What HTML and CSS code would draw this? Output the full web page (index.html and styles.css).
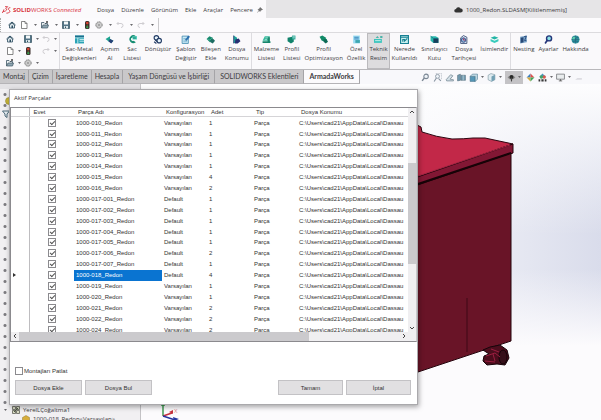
FILE: index.html
```html
<!DOCTYPE html>
<html lang="tr">
<head>
  <meta charset="UTF-8">
  <meta name="viewport" content="width=device-width, initial-scale=1.0">
  <title>1000_Redon.SLDASM</title>
  <link rel="stylesheet" href="styles.css">
</head>
<body>
  <svg class="sprite" aria-hidden="true">
    <symbol id="home" viewBox="0 0 16 16"><path d="M1 8l7-6 7 6" fill="none" stroke="#2d4d60" stroke-width="2"/><path d="M3 8v6h10V8L8 4z" fill="#dfe9ee" stroke="#2d4d60" stroke-width="1.6"/><path d="M7 9h3v5H7z" fill="#2d4d60"/></symbol>
    <symbol id="doc" viewBox="0 0 16 16"><path d="M3 1h7l4 4v10H3z" fill="#fff" stroke="#555" stroke-width="1.4"/><path d="M10 1v4h4" fill="none" stroke="#555" stroke-width="1.2"/></symbol>
    <symbol id="open" viewBox="0 0 16 16"><path d="M1 14V3h5l2 2h5v3" fill="#e8eef1" stroke="#3f5664" stroke-width="1.6"/><path d="M1 14l3-6h11l-2 6z" fill="#8fa6b3" stroke="#3f5664" stroke-width="1.4"/><path d="M9 5l4-4m0 0v3m0-3h-3" stroke="#333" stroke-width="1.4"/></symbol>
    <symbol id="save" viewBox="0 0 16 16"><path d="M1 1h14v14H1z" fill="#527386" stroke="#33515f" stroke-width="1.4"/><path d="M4 1h8v6H4z" fill="#f3f7f8"/><path d="M4 10h8v5H4z" fill="#dce6ea"/><path d="M6 11h2v3H6z" fill="#33515f"/></symbol>
    <symbol id="light" viewBox="0 0 16 16"><rect x="4" y="0" width="9" height="16" rx="3" fill="#3b2f2c"/><circle cx="8.500" cy="4" r="2.600" fill="#d8402f"/><circle cx="8.500" cy="8.500" r="1.500" fill="#70612e"/><circle cx="8.500" cy="12.500" r="2.300" fill="#3b9c50"/></symbol>
    <symbol id="gear" viewBox="0 0 16 16"><circle cx="8" cy="8" r="6.300" fill="none" stroke="#777" stroke-width="2" stroke-dasharray="3 1"/><circle cx="8" cy="8" r="5" fill="#eee" stroke="#777"/><circle cx="8" cy="8" r="2" fill="#fff" stroke="#666" stroke-width="1.4"/></symbol>
    <symbol id="undo" viewBox="0 0 16 16"><path d="M5 2L2 5l3 3M2 5h8q4 0 4 4t-4 4" fill="none" stroke="#cfcdd1" stroke-width="2"/></symbol>
    <symbol id="redo" viewBox="0 0 16 16"><path d="M11 2l3 3-3 3M14 5H6q-4 0-4 4t4 4" fill="none" stroke="#cfcdd1" stroke-width="2"/></symbol>
  </svg>

  <header class="titlebar">
    <div class="menu-side">
      <svg class="ds" viewBox="0 0 27 24"><path d="M9 2h8l-6 6q5 1 3 4-3 4-11 5M6 10q-4 9-5 11M25 5q-6 0-6 3t4 6-3 6-7 1" fill="none" stroke="#d8323c" stroke-width="2.600"/></svg>
      <span class="brand"><b>SOLID</b>WORKS <i>Connected</i></span>
      <nav class="menu">
        <a href="#">Dosya</a><a href="#">Düzenle</a><a href="#">Görünüm</a><a href="#">Ekle</a><a href="#">Araçlar</a><a href="#">Pencere</a>
      </nav>
      <svg class="pin" viewBox="0 0 12 12"><path d="M6 1l5 4-3 1-2 3-4-4 3-1zM4 7l-3 4" fill="#777" stroke="#555"/></svg>
    </div>
    <div class="doc-title">
      <svg class="cloud" viewBox="0 0 18 12"><path d="M4 11a3.500 3.500 0 0 1 0-7 5 5 0 0 1 9-1 4 4 0 0 1 1 8z" fill="#333"/></svg>
      <span>1000_Redon.SLDASM[Kilitlenmemiş]</span>
    </div>
  </header>

  <div class="quickbar">
    <div class="quick">
      <button aria-label="Giriş"><svg><use href="#home"/></svg></button>
      <button aria-label="Yeni"><svg><use href="#doc"/></svg></button><i class="caret"></i>
      <button aria-label="Aç"><svg><use href="#open"/></svg></button><i class="caret"></i>
      <button aria-label="Kaydet"><svg><use href="#save"/></svg></button><i class="caret"></i>
      <button aria-label="Yeniden oluştur"><svg><use href="#light"/></svg></button>
      <button aria-label="Seçenekler"><svg><use href="#gear"/></svg></button><i class="caret"></i>
      <button aria-label="Geri al"><svg><use href="#undo"/></svg></button><i class="caret"></i>
      <button aria-label="Yinele"><svg><use href="#redo"/></svg></button><i class="caret"></i>
    </div>
  </div>

  <div class="ribbon">
    <div class="mini">
      <button aria-label="Giriş"><svg><use href="#home"/></svg></button><i></i>
      <button aria-label="Kaydet"><svg><use href="#save"/></svg></button><i class="caret"></i>
      <button aria-label="Geri al"><svg><use href="#undo"/></svg></button><i class="caret"></i>
      <button aria-label="Yeni"><svg><use href="#doc"/></svg></button><i class="caret"></i>
      <button aria-label="Yeniden oluştur"><svg><use href="#light"/></svg></button><i></i>
      <button aria-label="Yinele"><svg><use href="#redo"/></svg></button><i class="caret"></i>
      <button aria-label="Aç"><svg><use href="#open"/></svg></button><i class="caret"></i>
      <button aria-label="Seçenekler"><svg><use href="#gear"/></svg></button><i class="caret"></i>
    </div>
    <div class="group">
      <button class="tool"><svg viewBox="0 0 16 16"><path d="M0 1h16v14H0z" fill="#2aa3b5"/><path d="M0 5h16M5 5v10M8 8h8M8 11h8" stroke="#d8f4f5" stroke-width="1.500"/><path d="M0 1h16v3H0z" fill="#1b6f8d"/></svg><span>Sac-Metal<br>Değişkenleri</span></button>
      <button class="tool"><svg viewBox="0 0 16 16"><path d="M1 7l8-5v5l6 3-4 4-5-3z" fill="#1fa591"/><path d="M9 7l6 3-4 5-5-4z" fill="#263f77"/></svg><span>Açınım<br>Al</span></button>
      <button class="tool"><svg viewBox="0 0 16 16"><path d="M14 2a7 7 0 1 0 0 11l-4-3a3 3 0 1 1 0-5z" fill="#168d73"/><path d="M8 2h8v6H8z" fill="#54d0bd"/><path d="M9 4h5M9 6h5" stroke="#187b6a"/></svg><span>Sac<br>Listesi</span></button>
      <button class="tool"><svg viewBox="0 0 16 16"><g fill="#e8f4fa" stroke="#233c66" stroke-width="2"><circle cx="6" cy="5" r="4"/><circle cx="11" cy="10" r="4"/><path d="M2 12l4 3M4 9l4 3"/></g></svg><span>Dönüştür</span></button>
      <button class="tool"><svg viewBox="0 0 16 16"><path d="M2 2h11v13H2z" fill="#d4f2fb" stroke="#438bb0" stroke-width="1.500"/><path d="M4 6h5M4 9h7M4 12h7" stroke="#438bb0"/><path d="M7 9l6-8 3 2-6 7z" fill="#2c6fae"/></svg><span>Şablon<br>Değiştir</span></button>
      <button class="tool"><svg viewBox="0 0 16 16"><path d="M1 7l5-5 6 3v5l-5 3z" fill="#16886c"/><path d="M8 8l5-1 3 3-4 5-4-2z" fill="#1d6b62"/><path d="M2 7l5 2 4-4" fill="none" stroke="#5cc5ab"/></svg><span>Bileşen<br>Ekle</span></button>
      <button class="tool"><svg viewBox="0 0 16 16"><path d="M3 1l6 4v9H3z" fill="#1ea59b"/><path d="M6 8l6-2 3 5-5 4H5z" fill="#262e72"/><path d="M3 1v14" stroke="#263a73" stroke-width="1.500"/></svg><span>Dosya<br>Konumu</span></button>
    </div>
    <div class="group">
      <button class="tool"><svg viewBox="0 0 16 16"><path d="M5 2h9l-2 8H1z" fill="#36b89b"/><path d="M1 11h14v3H1zM10 4h4v8h-4z" fill="#16866c"/><path d="M6 5h5M5 8h4" stroke="#c8f1e6"/></svg><span>Malzeme<br>Listesi</span></button>
      <button class="tool"><svg viewBox="0 0 16 16"><path d="M1 5l8-2 3 3v6l-5 3-6-4z" fill="#11836b"/><path d="M9 1h6v7H9z" fill="#2fa897"/><path d="M10 3h4M10 5h4" stroke="#cceee7"/></svg><span>Profil<br>Listesi</span></button>
      <button class="tool"><svg viewBox="0 0 16 16"><path d="M1 3l5-2 5 3 3 5-4 2-5-1z" fill="#118b68"/><path d="M8 8l5-1 3 5-4 3-4-3z" fill="#0f6a55"/></svg><span>Profil<br>Optimizasyon</span></button>
      <button class="tool"><svg viewBox="0 0 16 16"><path d="M2 1h12v14H2z" fill="#9bdcf2"/><path d="M4 4h8M4 7h8" stroke="#2e78b2" stroke-width="1.500"/><path d="M6 9h8v5H6z" fill="#3ea6b0"/></svg><span>Özel<br>Özellik</span></button>
      <button class="tool on"><svg viewBox="0 0 16 16"><path d="M0 7h14v7H0z" fill="#3ac5bd"/><path d="M3 5l3-3 3 3zM11 2h4v3h-4z" fill="#1ea597"/><path d="M2 10h10" stroke="#d5f5f1" stroke-width="1.500"/></svg><span>Teknik<br>Resim</span></button>
      <button class="tool"><svg viewBox="0 0 16 16"><path d="M1 1h14v14H1z" fill="#c8f0ef" stroke="#178093" stroke-width="2"/><path d="M1 4h14M5 12V8h3v4M9 10l4-4" fill="none" stroke="#178093" stroke-width="2"/></svg><span>Nerede<br>Kullanıldı</span></button>
      <button class="tool"><svg viewBox="0 0 16 16"><path d="M1 2h9l5 3v9H6l-5-4z" fill="#29b8ae"/><path d="M6 6h9v8H6z" fill="#173e5c"/><path d="M1 2l5 4" stroke="#125f6c"/></svg><span>Sınırlayıcı<br>Kutu</span></button>
      <button class="tool"><svg viewBox="0 0 16 16"><path d="M3 5l5-4 6 3v11H3z" fill="#e6effa" stroke="#34476f" stroke-width="1.500"/><circle cx="8" cy="9" r="4" fill="#8cb5d9" stroke="#26417c" stroke-width="1.500"/><path d="M8 6v3h3" fill="none" stroke="#b12d52" stroke-width="1.500"/></svg><span>Dosya<br>Tarihçesi</span></button>
      <button class="tool"><svg viewBox="0 0 16 16"><path d="M1 5l7-3 7 3-7 3z" fill="#22b5a5"/><path d="M1 7l7 3 7-3v4l-7 3-7-3z" fill="#38cbbc"/></svg><span>İsimlendir</span></button>
    </div>
    <div class="group last">
      <button class="tool"><svg viewBox="0 0 16 16"><path d="M2 3l12-2v12L2 15z" fill="#7ea7cb"/><path d="M3 5l5-1v9l-5 1z" fill="#284876"/><path d="M9 3l4-1-3 8h3" fill="none" stroke="#1d3f73" stroke-width="1.500"/></svg><span>Nesting</span></button>
      <button class="tool"><svg viewBox="0 0 16 16"><circle cx="9" cy="6" r="4.500" fill="#8ce1e6" stroke="#25357a" stroke-width="2.500"/><path d="M6 9l-4 6" stroke="#25357a" stroke-width="3"/></svg><span>Ayarlar</span></button>
      <button class="tool"><svg viewBox="0 0 16 16"><circle cx="8" cy="8" r="7" fill="#2b8f9a"/><path d="M3 4q5 3 10 0M1 8h14M3 12q5-3 10 0M8 1v14" fill="none" stroke="#236078"/><path d="M4 3l4 1-2 4-4-1z" fill="#5fcfae"/></svg><span>Hakkında</span></button>
    </div>
  </div>

  <div class="tabrow">
    <nav class="tabs">
      <a href="#">Montaj</a><a href="#">Çizim</a><a href="#">İşaretleme</a><a href="#">Hesapla</a><a href="#" class="wide">Yaşam Döngüsü ve İşbirliği</a><a href="#" class="wide">SOLIDWORKS Eklentileri</a><a href="#" class="active">ArmadaWorks</a>
    </nav>
    <div class="view-tools">
      <svg viewBox="0 0 16 16"><circle cx="9" cy="6" r="4" fill="#eef3f8" stroke="#7b8794" stroke-width="1.800"/><path d="M6 9l-4 5" stroke="#7b8794" stroke-width="2.500"/></svg>
      <svg viewBox="0 0 16 16"><path d="M5 1h10v10" fill="none" stroke="#9aa3ad" stroke-dasharray="2 1"/><circle cx="8" cy="6" r="3.500" fill="#eef3f8" stroke="#8794a1" stroke-width="1.500"/><path d="M6 9l-4 6M10 10l4 4" stroke="#8794a1" stroke-width="2"/></svg>
      <svg viewBox="0 0 16 16"><path d="M2 12l8-9 4 2-5 6 6 1v2H3z" fill="#d3e0e7" stroke="#80929c" stroke-width="1.500"/></svg>
      <svg viewBox="0 0 16 16"><path d="M1 4l5-2v11l-5 1zM7 4h8v9H7z" fill="#719bb0" stroke="#526b7a"/><path d="M11 4v9" stroke="#dbe7ed"/></svg>
      <svg viewBox="0 0 16 16"><path d="M2 6h9v9H2z" fill="#5597b7" stroke="#3e6d86"/><path d="M2 6l4-4h9v9l-4 4V6z" fill="#c1dbe6" stroke="#3e6d86"/></svg><i class="caret"></i>
      <svg viewBox="0 0 16 16"><path d="M2 4l5-3 7 2v9l-6 3-6-3z" fill="#dfecf1" stroke="#718b98"/><path d="M8 6l6-3v9l-6 3z" fill="#72a0b4"/></svg><i class="caret"></i>
      <span class="pressed"><svg viewBox="0 0 16 16"><path d="M1 8q7-8 14 0-7 7-14 0z" fill="#888"/><circle cx="8" cy="7" r="3.500" fill="#282828"/><path d="M8 8v7" stroke="#444" stroke-width="2"/></svg><i class="caret"></i></span>
      <svg viewBox="0 0 16 16"><path d="M8 1L1 8h7z" fill="#3c7fc0"/><path d="M8 1l7 7H8z" fill="#df514b"/><path d="M1 8l7 7V8z" fill="#d4a93f"/><path d="M15 8l-7 7V8z" fill="#40a45b"/></svg>
      <svg viewBox="0 0 16 16"><path d="M2 7l6-6 6 6z" fill="#4796bd"/><circle cx="11" cy="7" r="3" fill="#d45a4e"/><circle cx="6" cy="7" r="3" fill="#45a168"/><path d="M1 11h3v4H1zM6 11h4v4H6zM12 11h3v4h-3z" fill="#363636"/></svg><i class="caret"></i>
      <svg viewBox="0 0 16 16"><path d="M1 2h14v9H1z" fill="#e9ecee" stroke="#7d7f83" stroke-width="1.500"/><path d="M8 11v3M5 14h6" stroke="#555" stroke-width="1.500"/></svg><i class="caret"></i>
      <svg viewBox="0 0 16 16"><path d="M2 12l4-3h8v3z" fill="#dddce2"/></svg>
    </div>
  </div>

  <main class="workspace">
    <aside class="tree">
      <div class="tree-top"></div>
      <div class="strip">
        <svg class="cog" viewBox="0 0 16 16"><circle cx="8" cy="8" r="7" fill="#c8b637" stroke="#877f31"/></svg>
        <svg class="filter" viewBox="0 0 16 16"><path d="M1 2h14l-5 6v7l-4-3V8z" fill="#e5edf1" stroke="#4c6878" stroke-width="2"/></svg>
      </div>
      <div class="node"><i class="caret"></i><svg viewBox="0 0 16 16"><path d="M1 1h6v6H1zM9 1h6v6H9zM1 9h6v6H1zM9 9h6v6H9z" fill="#d9dcc4" stroke="#55574d" stroke-width="1.500"/><path d="M4 12l8-8" stroke="#505d42" stroke-width="2"/></svg>YerelLÇoğaltma1</div>
      <div class="node child"><svg viewBox="0 0 16 16"><path d="M1 5l7-4 7 4v9H1z" fill="#d7ae3c" stroke="#93782e"/></svg>1000-018_Redon&lt;Varsayılan&gt;</div>
    </aside>

    <svg class="scene" viewBox="141 84 460 336" preserveAspectRatio="xMinYMin slice">
      <path d="M400 120l17 5 4 2 1 5q14 5 30 7 12 0 21-1h12l28 6-96 34h-17z" fill="#c22848" stroke="#2b0610"/>
      <path d="M400 183l113-39v9l-96 33h-17z" fill="#821734" stroke="#25040d"/>
      <path d="M400 182l110-37" stroke="#a32543"/>
      <path d="M400 191l111-38v188l-111 37z" fill="#691427" stroke="#25040d"/>
      <path d="M400 190l111-37" stroke="#160307" stroke-width="2"/>
      <path d="M467 298v54" stroke="#3f0916"/>
      <path d="M490 347l10-2 7 5 2 8-4 7-8-1-10 1-4-4 1-5 5-2-6-4z" fill="#4c0d1d" stroke="#16050a"/>
      <ellipse cx="503" cy="357" rx="4" ry="7" fill="#35101a" stroke="#130408"/>
      <path d="M486 356l9-3 5 4M485 361l10 1M491 349l8 3M493 354l2 7" stroke="#9b1e40" fill="none"/>
      <g stroke-width="1.500" fill="none"><path d="M163 416v-12" stroke="#3f9b50"/><path d="M163 416l9-3" stroke="#c5303c"/><path d="M163 416l12 4" stroke="#2436a0"/></g>
      <path d="M161 406l2-4 2 4z" fill="#3f9b50"/><path d="M169 412l4-2v4z" fill="#c5303c"/><path d="M173 417l6 2-5 2z" fill="#2436a0"/>
      <text class="axis" x="174" y="413">X</text>
    </svg>

    <section class="dialog" aria-label="Aktif Parçalar">
      <h1>Aktif Parçalar</h1>
      <div class="grid-box">
        <div class="grid-view">
          <table>
            <colgroup><col class="c-mark"><col class="c-mid"><col class="c-name"><col class="c-mid"><col class="c-mid"><col class="c-mid"><col></colgroup>
            <thead><tr><th></th><th>Evet</th><th>Parça Adı</th><th>Konfigurasyon</th><th>Adet</th><th>Tip</th><th>Dosya Konumu</th></tr></thead>
            <tbody>
              <tr><td></td><td><input type="checkbox" aria-label="1000-010_Redon" checked></td><td>1000-010_Redon</td><td>Varsayılan</td><td>1</td><td>Parça</td><td>C:\Users\cad21\AppData\Local\Dassau</td></tr>
              <tr><td></td><td><input type="checkbox" aria-label="1000-011_Redon" checked></td><td>1000-011_Redon</td><td>Varsayılan</td><td>1</td><td>Parça</td><td>C:\Users\cad21\AppData\Local\Dassau</td></tr>
              <tr><td></td><td><input type="checkbox" aria-label="1000-012_Redon" checked></td><td>1000-012_Redon</td><td>Varsayılan</td><td>1</td><td>Parça</td><td>C:\Users\cad21\AppData\Local\Dassau</td></tr>
              <tr><td></td><td><input type="checkbox" aria-label="1000-013_Redon" checked></td><td>1000-013_Redon</td><td>Varsayılan</td><td>1</td><td>Parça</td><td>C:\Users\cad21\AppData\Local\Dassau</td></tr>
              <tr><td></td><td><input type="checkbox" aria-label="1000-014_Redon" checked></td><td>1000-014_Redon</td><td>Varsayılan</td><td>1</td><td>Parça</td><td>C:\Users\cad21\AppData\Local\Dassau</td></tr>
              <tr><td></td><td><input type="checkbox" aria-label="1000-015_Redon" checked></td><td>1000-015_Redon</td><td>Varsayılan</td><td>4</td><td>Parça</td><td>C:\Users\cad21\AppData\Local\Dassau</td></tr>
              <tr><td></td><td><input type="checkbox" aria-label="1000-016_Redon" checked></td><td>1000-016_Redon</td><td>Varsayılan</td><td>2</td><td>Parça</td><td>C:\Users\cad21\AppData\Local\Dassau</td></tr>
              <tr><td></td><td><input type="checkbox" aria-label="1000-017-001_Redon" checked></td><td>1000-017-001_Redon</td><td>Default</td><td>1</td><td>Parça</td><td>C:\Users\cad21\AppData\Local\Dassau</td></tr>
              <tr><td></td><td><input type="checkbox" aria-label="1000-017-002_Redon" checked></td><td>1000-017-002_Redon</td><td>Default</td><td>1</td><td>Parça</td><td>C:\Users\cad21\AppData\Local\Dassau</td></tr>
              <tr><td></td><td><input type="checkbox" aria-label="1000-017-003_Redon" checked></td><td>1000-017-003_Redon</td><td>Default</td><td>1</td><td>Parça</td><td>C:\Users\cad21\AppData\Local\Dassau</td></tr>
              <tr><td></td><td><input type="checkbox" aria-label="1000-017-004_Redon" checked></td><td>1000-017-004_Redon</td><td>Default</td><td>1</td><td>Parça</td><td>C:\Users\cad21\AppData\Local\Dassau</td></tr>
              <tr><td></td><td><input type="checkbox" aria-label="1000-017-005_Redon" checked></td><td>1000-017-005_Redon</td><td>Default</td><td>1</td><td>Parça</td><td>C:\Users\cad21\AppData\Local\Dassau</td></tr>
              <tr><td></td><td><input type="checkbox" aria-label="1000-017-006_Redon" checked></td><td>1000-017-006_Redon</td><td>Default</td><td>2</td><td>Parça</td><td>C:\Users\cad21\AppData\Local\Dassau</td></tr>
              <tr><td></td><td><input type="checkbox" aria-label="1000-017-007_Redon" checked></td><td>1000-017-007_Redon</td><td>Default</td><td>1</td><td>Parça</td><td>C:\Users\cad21\AppData\Local\Dassau</td></tr>
              <tr><td class="marker"></td><td><input type="checkbox" aria-label="1000-018_Redon" checked></td><td class="selected">1000-018_Redon</td><td>Default</td><td>4</td><td>Parça</td><td>C:\Users\cad21\AppData\Local\Dassau</td></tr>
              <tr><td></td><td><input type="checkbox" aria-label="1000-019_Redon" checked></td><td>1000-019_Redon</td><td>Varsayılan</td><td>1</td><td>Parça</td><td>C:\Users\cad21\AppData\Local\Dassau</td></tr>
              <tr><td></td><td><input type="checkbox" aria-label="1000-020_Redon" checked></td><td>1000-020_Redon</td><td>Varsayılan</td><td>1</td><td>Parça</td><td>C:\Users\cad21\AppData\Local\Dassau</td></tr>
              <tr><td></td><td><input type="checkbox" aria-label="1000-021_Redon" checked></td><td>1000-021_Redon</td><td>Varsayılan</td><td>2</td><td>Parça</td><td>C:\Users\cad21\AppData\Local\Dassau</td></tr>
              <tr><td></td><td><input type="checkbox" aria-label="1000-022_Redon" checked></td><td>1000-022_Redon</td><td>Varsayılan</td><td>2</td><td>Parça</td><td>C:\Users\cad21\AppData\Local\Dassau</td></tr>
              <tr><td></td><td><input type="checkbox" aria-label="1000-024_Redon" checked></td><td>1000-024_Redon</td><td>Varsayılan</td><td>2</td><td>Parça</td><td>C:\Users\cad21\AppData\Local\Dassau</td></tr>
            </tbody>
          </table>
          <div class="vbar">
            <svg viewBox="0 0 8 8"><path d="M2 5l2-2 2 2" /></svg>
            <div class="vtrack"><div class="vthumb"></div></div>
            <svg viewBox="0 0 8 8"><path d="M2 3l2 2 2-2" /></svg>
          </div>
        </div>
        <div class="hbar">
          <svg viewBox="0 0 8 8"><path d="M5 2L3 4l2 2" /></svg>
          <div class="htrack"><div class="hthumb"></div></div>
          <svg viewBox="0 0 8 8"><path d="M3 2l2 2-2 2" /></svg>
        </div>
      </div>
      <div class="dialog-foot">
        <label><input type="checkbox">Montajları Patlat</label>
        <div class="actions">
          <button>Dosya Ekle</button>
          <button>Dosya Bul</button>
          <button class="ok">Tamam</button>
          <button class="cancel">İptal</button>
        </div>
      </div>
    </section>
  </main>
</body>
</html>
```
FILE: styles.css
```css
* {
    box-sizing: border-box;
}

body {
    font-family: "Open Sans", "Noto Sans", sans-serif;
    font-size: 6px;
    line-height: 8px;
    color: #3c3b3e;
    background-color: #fcfbfd;
    margin: 0;
    height: 100vh;
    min-height: 420px;
    display: flex;
    flex-direction: column;
    overflow: hidden;
}

svg {
    display: block;
}

.sprite {
    display: none;
}

button {
    font: inherit;
    color: inherit;
    padding: 0;
    border: none;
    background: none;
}

a {
    color: inherit;
    text-decoration: none;
}

.caret {
    width: 3px;
    height: 2px;
    background-color: #6b6a6e;
    clip-path: polygon(0 0, 100% 0, 50% 100%);
}

/* title bar */
.titlebar {
    display: flex;
    height: 18px;
    background-color: #e6e5e7;
}

.menu-side {
    display: flex;
    align-items: center;
    width: 266px;
    padding: 2px 2px 0;
    background-color: #fbfafc;
}

.ds {
    width: 9px;
    height: 8px;
    margin-right: 2px;
}

.brand {
    color: #d8323c;
    white-space: nowrap;
    width: 84px;
}

.menu {
    display: flex;
    gap: 7px;
    margin-right: auto;
}

.pin {
    width: 6px;
    height: 6px;
    margin-right: 1px;
}

.doc-title {
    flex: 1;
    display: flex;
    align-items: center;
    justify-content: flex-end;
    gap: 3px;
    padding: 2px 34px 0 0;
}

.cloud {
    width: 9px;
    height: 6px;
}

/* quick access */
.quickbar {
    height: 15px;
    border-bottom: 1px solid #dcdbde;
}

.quick {
    display: flex;
    align-items: center;
    gap: 4px;
    width: 159px;
    height: 14px;
    padding-left: 7px;
    border-left: 1px dotted #aaa;
    border-right: 1px solid #cbcacd;
}

.quick svg,
.mini svg {
    width: 8px;
    height: 8px;
}

.quick .caret {
    margin-left: 2px;
}

/* ribbon */
.ribbon {
    display: flex;
    height: 36px;
    background-color: #faf9fb;
}

.mini {
    display: grid;
    grid-template-columns: 9px 3px 9px 3px 9px 3px;
    gap: 0 3px;
    align-items: center;
    width: 60px;
    padding-left: 6px;
    border-right: 1px solid #dddce0;
}

.group {
    display: flex;
    border-right: 1px solid #dddce0;
}

.group.last {
    border-right: none;
}

.tool {
    display: flex;
    flex-direction: column;
    align-items: center;
    padding: 2px 2px 0;
    line-height: 9px;
    white-space: nowrap;
}

.tool svg {
    width: 9px;
    height: 9px;
    margin-bottom: 1px;
}

.tool.on {
    background-color: #dddcde;
    outline: 1px solid #bbbabd;
    outline-offset: -1px;
}

/* tabs */
.tabrow {
    display: flex;
    justify-content: space-between;
    height: 15px;
    border-top: 1px solid #b9b8bb;
    background-color: #f8f8fb;
}

.tabs {
    display: flex;
    font-family: Lato, "Open Sans", sans-serif;
    font-size: 7px;
    line-height: 13px;
    white-space: nowrap;
}

.tabs a {
    padding: 0 3px;
    background-color: #c9c8ca;
    border-right: 1px solid #a5a4a7;
    border-bottom: 1px solid #b5b4b7;
}

.tabs .wide {
    padding: 0 5px;
}

.tabs .active {
    padding: 0 5px;
    background-color: #fbfafc;
    font-weight: bold;
}

.view-tools {
    display: flex;
    align-items: center;
    gap: 3px;
    padding-right: 18px;
}

.view-tools svg {
    width: 9px;
    height: 9px;
}

.pressed {
    display: flex;
    align-items: center;
    gap: 2px;
    height: 13px;
    padding: 0 2px;
    background-color: #c4c3c6;
}

/* workspace */
.workspace {
    position: relative;
    flex: 1;
    display: flex;
    min-height: 0;
}

.tree {
    display: flex;
    flex-direction: column;
    width: 141px;
    background-color: #f1f0f2;
    border-right: 1px solid #c4c3c6;
    overflow: hidden;
}

.tree-top {
    height: 5px;
    background-color: #e3e2e5;
}

.strip {
    flex: 1;
    padding-top: 8px;
    background: radial-gradient(circle, #7c7b80 1px, transparent 2px) 0 0 / 10px 11px repeat-y;
}

.cog {
    width: 8px;
    height: 8px;
    margin-left: 5px;
}

.filter {
    width: 8px;
    height: 8px;
    margin: 5px 0 0 2px;
    background-color: #f1f0f2;
}

.node {
    display: flex;
    align-items: center;
    gap: 3px;
    height: 10px;
    flex: none;
    padding-left: 4px;
    white-space: nowrap;
}

.node svg {
    width: 8px;
    height: 8px;
    margin-left: 2px;
}

.child {
    height: 5px;
    padding-left: 20px;
    align-items: flex-start;
}

.scene {
    flex: 1;
    min-width: 0;
    height: 100%;
    background: linear-gradient(180deg, #fdfdfe 0%, transparent 45%, transparent 55%, #fcfbfd 78%), linear-gradient(90deg, #fcfcfe 50%, #d9dceb);
}

.axis {
    font-size: 6px;
    fill: #d88;
}

/* dialog */
.dialog {
    position: absolute;
    top: 5px;
    left: 9px;
    width: 409px;
    height: 316px;
    display: flex;
    flex-direction: column;
    font-family: "Liberation Sans", Arial, sans-serif;
    color: #333;
    background-color: #fff;
    border: 1px solid #aaa9ac;
    box-shadow: 1px 2px 5px rgba(0, 0, 0, 0.35);
}

.dialog h1 {
    margin: 0;
    padding-left: 4px;
    font-family: "Open Sans", "Noto Sans", sans-serif;
    font-size: 6px;
    font-weight: normal;
    line-height: 17px;
}

.grid-box {
    border: 1px solid #8b8a8e;
    border-right-color: #c9c8cb;
}

.grid-view {
    display: flex;
    height: 224px;
    overflow: hidden;
}

table {
    flex: 1;
    height: 227px;
    border-collapse: collapse;
    table-layout: fixed;
    width: 100%;
}

.c-mark {
    width: 18px;
}

.c-mid {
    width: 45px;
}

.c-name {
    width: 88px;
}

th,
td {
    padding: 0 0 0 2px;
    font-weight: normal;
    text-align: left;
    white-space: nowrap;
    overflow: hidden;
}

th {
    padding-left: 4px;
    border-bottom: 1px solid #d5d4d7;
}

th:first-child,
td:first-child {
    border-right: 1px solid #bebdc0;
}

td:nth-child(2) {
    padding: 0;
}

td input {
    margin: 0 auto;
}

input[type="checkbox"] {
    appearance: none;
    display: block;
    width: 8px;
    height: 8px;
    border: 1px solid #8b8a8e;
    background-color: #fff;
}

input[type="checkbox"]:checked::after {
    content: "";
    display: block;
    width: 4px;
    height: 2px;
    margin: 1px;
    border-left: 1px solid #555;
    border-bottom: 1px solid #555;
    transform: rotate(-45deg);
}

.selected {
    color: #fff;
    background-color: #0a74d1;
}

.marker::before {
    content: "";
    display: block;
    width: 3px;
    height: 4px;
    background-color: #333;
    clip-path: polygon(0 0, 100% 50%, 0 100%);
}

.vbar {
    display: flex;
    flex-direction: column;
    width: 8px;
    background-color: #f0eff1;
}

.vbar svg,
.hbar svg {
    flex: none;
    width: 8px;
    height: 8px;
    fill: none;
    stroke: #444;
}

.vtrack {
    flex: 1;
    padding-top: 47px;
}

.vthumb {
    height: 101px;
    background-color: #cbcacd;
}

.hbar {
    display: flex;
    height: 9px;
    padding-right: 8px;
    background-color: #f0eff1;
}

.htrack {
    flex: 1;
}

.hthumb {
    width: 76%;
    height: 9px;
    background-color: #cbcacd;
}

.dialog-foot {
    flex: 1;
    display: flex;
    flex-direction: column;
    justify-content: flex-end;
    gap: 5px;
    padding: 0 6px 9px 5px;
}

.dialog-foot label {
    display: flex;
    align-items: center;
}

.dialog-foot input {
    margin: 0 1px 0 0;
}

.actions {
    display: flex;
    gap: 3px;
}

.actions button {
    width: 67px;
    height: 15px;
    background-color: #e1e0e2;
    border: 1px solid #c3c2c5;
}

.actions .ok {
    margin-left: auto;
}

.actions .ok,
.actions .cancel {
    width: 65px;
}
```
